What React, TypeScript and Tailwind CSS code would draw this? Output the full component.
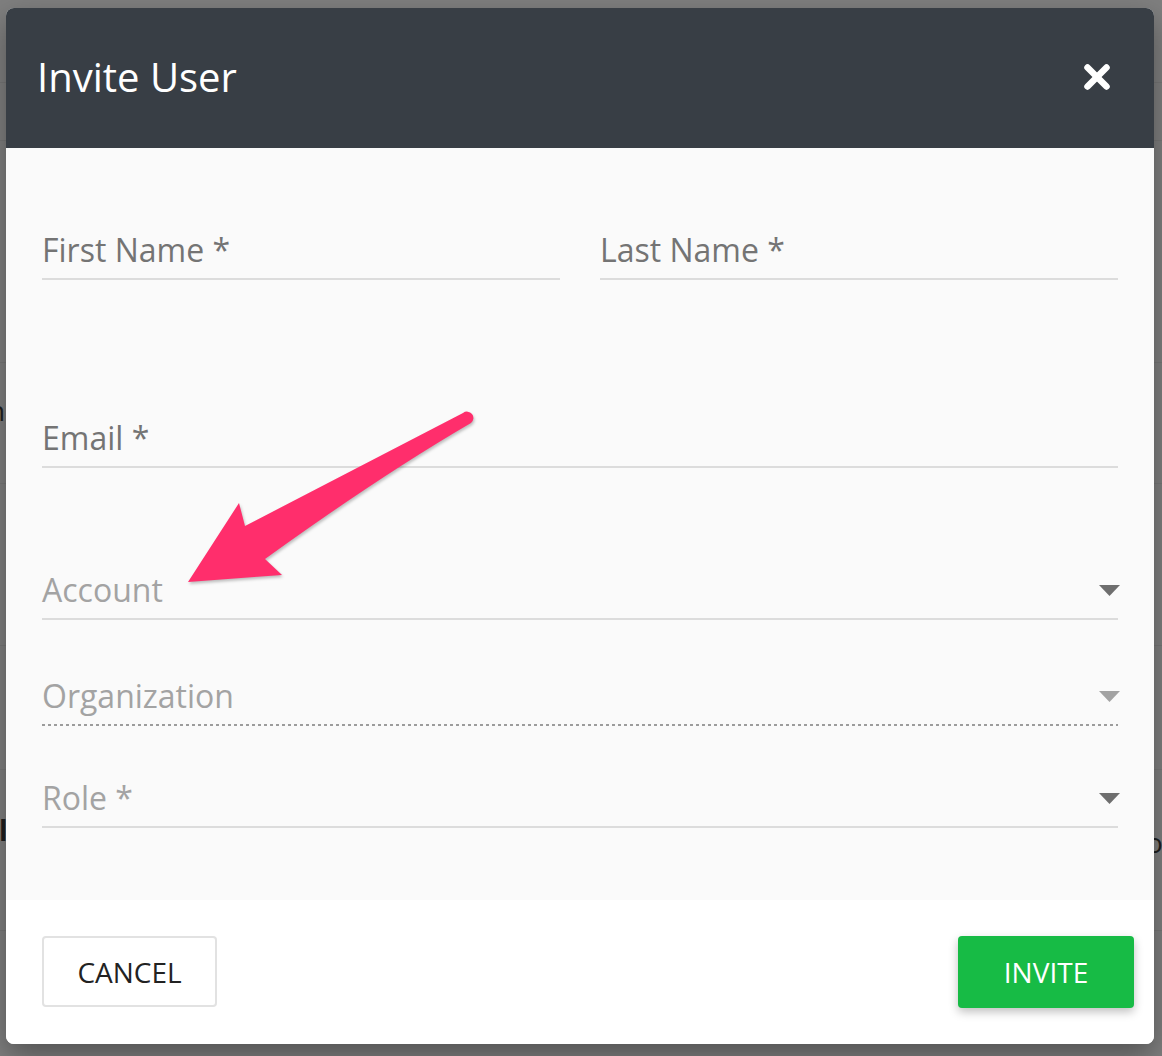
import React from "react";

function Caret({ color }: { color: string }) {
  return (
    <svg width="21" height="11" viewBox="0 0 21 11" className="mr-[-2px] shrink-0">
      <polygon points="0,0 21,0 10.5,11" fill={color} />
    </svg>
  );
}

function Field({
  label,
  labelClass,
  lineClass,
  caret,
  wrapClass,
}: {
  label: string;
  labelClass: string;
  lineClass: string;
  caret?: string;
  wrapClass: string;
}) {
  return (
    <div className={wrapClass}>
      <div className="flex items-center justify-between h-[40px] mb-[8px]">
        <span className={labelClass}>{label}</span>
        {caret && <Caret color={caret} />}
      </div>
      <div className={lineClass} />
    </div>
  );
}

export default function App() {
  return (
    <div className="relative w-[1162px] h-[1056px] overflow-hidden bg-[#7f7f7f] font-['Open_Sans','Noto_Sans',sans-serif]">
      {/* dimmed page behind the dialog */}
      <div className="absolute inset-0">
        <div className="absolute left-0 right-0 top-[82px] h-px bg-[#777777]" />
        <div className="absolute left-0 right-0 top-[140px] h-px bg-[#787878]" />
        <div className="absolute left-0 right-0 top-[362px] h-px bg-[#777777]" />
        <div className="absolute left-0 right-0 top-[483px] h-px bg-[#787878]" />
        <div className="absolute left-0 right-0 top-[645px] h-px bg-[#777777]" />
        <div className="absolute left-0 right-0 top-[769px] h-px bg-[#787878]" />
        <div className="absolute left-0 right-0 top-[930px] h-px bg-[#777777]" />
        <span className="absolute left-[-12px] top-[394px] text-[28px] leading-[32px] text-[#1e1e1e]">h</span>
        <span className="absolute left-[-1px] top-[814px] text-[28px] leading-[32px] font-bold text-[#1e1e1e]">l</span>
        <span className="absolute left-[1146px] top-[826px] text-[28px] leading-[32px] text-[#1e1e1e]">o</span>
      </div>

      {/* dialog */}
      <div className="relative ml-[6px] mt-[8px] w-[1148px] h-[1036px] rounded-[8px] overflow-hidden bg-white shadow-[0_12px_30px_rgba(0,0,0,0.35)] flex flex-col">
        <div className="h-[140px] shrink-0 bg-[#383e45] flex items-center justify-between pl-[31px] pr-[44px] pb-[2px]">
          <span className="text-[40px] leading-[48px] text-white">Invite User</span>
          <svg width="26" height="26" viewBox="0 0 26 26" className="mt-[0px]">
            <line x1="3.5" y1="3.5" x2="22.5" y2="22.5" stroke="white" strokeWidth="6.5" strokeLinecap="round" />
            <line x1="22.5" y1="3.5" x2="3.5" y2="22.5" stroke="white" strokeWidth="6.5" strokeLinecap="round" />
          </svg>
        </div>

        <div className="h-[752px] shrink-0 bg-[#fafafa] px-[36px] pt-[82px] flex flex-col">
          <div className="flex gap-[40px]">
            <Field
              wrapClass="flex-1"
              label="First Name *"
              labelClass="text-[32px] leading-[40px] text-[#747474]"
              lineClass="h-[2px] bg-[#dcdcdc]"
            />
            <Field
              wrapClass="flex-1"
              label="Last Name *"
              labelClass="text-[32px] leading-[40px] text-[#747474]"
              lineClass="h-[2px] bg-[#dcdcdc]"
            />
          </div>
          <Field
            wrapClass="mt-[138px]"
            label="Email *"
            labelClass="text-[32px] leading-[40px] text-[#747474]"
            lineClass="h-[2px] bg-[#dcdcdc]"
          />
          <Field
            wrapClass="mt-[102px]"
            label="Account"
            labelClass="text-[32px] leading-[40px] text-[#a3a3a3]"
            lineClass="h-[2px] bg-[#dcdcdc]"
            caret="#6e6e6e"
          />
          <Field
            wrapClass="mt-[56px]"
            label="Organization"
            labelClass="text-[32px] leading-[40px] text-[#a3a3a3]"
            lineClass="h-[2px] bg-[repeating-linear-gradient(to_right,#9c9c9c_0_3px,transparent_3px_6px)]"
            caret="#a3a3a3"
          />
          <Field
            wrapClass="mt-[52px]"
            label="Role *"
            labelClass="text-[32px] leading-[40px] text-[#a3a3a3]"
            lineClass="h-[2px] bg-[#dcdcdc]"
            caret="#6e6e6e"
          />
        </div>

        <div className="flex-1 bg-white flex items-start justify-between pt-[36px] pl-[36px] pr-[20px]">
          <button className="w-[175px] h-[71px] rounded-[4px] border-2 border-[#e2e2e2] bg-white text-[28px] leading-[32px] text-[#222222]">
            CANCEL
          </button>
          <button className="w-[176px] h-[72px] rounded-[4px] bg-[#17bb45] text-[28px] leading-[32px] text-white shadow-[0_4px_10px_rgba(0,0,0,0.25)]">
            INVITE
          </button>
        </div>
      </div>

      {/* annotation arrow */}
      <svg
        className="absolute left-0 top-0 pointer-events-none drop-shadow-[1px_2px_1.5px_rgba(0,0,0,0.25)]"
        width="1162"
        height="1056"
        viewBox="0 0 1162 1056"
      >
        <path
          d="M 463 413 L 245 526 L 239 503 L 188 582 L 282 575 L 265 559 Q 380 476 471 423 A 5.5 5.5 0 0 0 463 413 Z"
          fill="#ff2e6c"
        />
      </svg>
    </div>
  );
}
